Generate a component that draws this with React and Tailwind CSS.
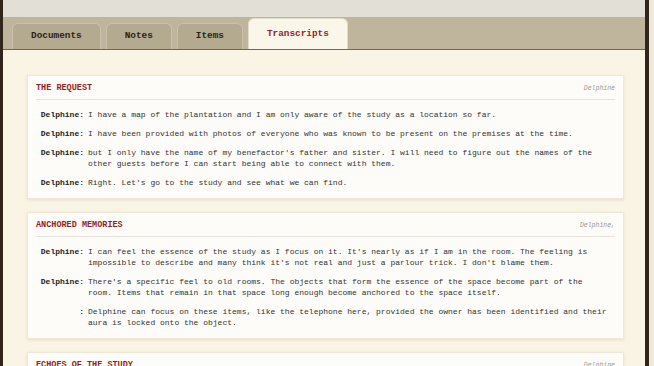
import { useState } from "react";

const tabs = ["Documents", "Notes", "Items", "Transcripts"];

const transcripts = [
  {
    title: "THE REQUEST",
    speakers: "Delphine",
    lines: [
      { who: "Delphine", text: "I have a map of the plantation and I am only aware of the study as a location so far." },
      { who: "Delphine", text: "I have been provided with photos of everyone who was known to be present on the premises at the time." },
      {
        who: "Delphine",
        text: "but I only have the name of my benefactor's father and sister. I will need to figure out the names of the other guests before I can start being able to connect with them.",
      },
      { who: "Delphine", text: "Right. Let's go to the study and see what we can find." },
    ],
  },
  {
    title: "ANCHORED MEMORIES",
    speakers: "Delphine,",
    lines: [
      {
        who: "Delphine",
        text: "I can feel the essence of the study as I focus on it. It's nearly as if I am in the room. The feeling is impossible to describe and many think it's not real and just a parlour trick. I don't blame them.",
      },
      {
        who: "Delphine",
        text: "There's a specific feel to old rooms. The objects that form the essence of the space become part of the room. Items that remain in that space long enough become anchored to the space itself.",
      },
      {
        who: "",
        text: "Delphine can focus on these items, like the telephone here, provided the owner has been identified and their aura is locked onto the object.",
      },
    ],
  },
  {
    title: "ECHOES OF THE STUDY",
    speakers: "Delphine",
    lines: [{ who: "Delphine", text: "The telephone is the first thing I notice." }],
  },
];

const TranscriptCard = ({ item }) => {
  return (
    <div className="bg-[#fdfcf9] border border-[#efe8d8] shadow-[0_1px_3px_rgba(90,70,40,0.12)] px-[8px] shrink-0">
      <div className="flex items-center justify-between pt-[7px] pb-[5px] border-b border-[#e8e3d8] leading-[11px]">
        <span className="text-[8.5px] font-bold text-[#9a1b22]">{item.title}</span>
        <span className="text-[6.5px] italic text-[#9a9690]">{item.speakers}</span>
      </div>
      <div className="flex flex-col gap-[8px] pt-[9px] pb-[10px] pr-[7px]">
        {item.lines.map((line, i) => (
          <div key={i} className="flex text-[8px] leading-[11px]">
            <span className="w-[48px] shrink-0 text-right font-bold text-[#222]">{line.who}:</span>
            <span className="flex-1 pl-[4px] text-[#333]">{line.text}</span>
          </div>
        ))}
      </div>
    </div>
  );
};

export default function App() {
  const [active, setActive] = useState("Transcripts");

  return (
    <div className="flex w-[654px] h-[366px] overflow-hidden bg-[#efe9d9] font-['Liberation_Mono','Courier_New',monospace]">
      <div className="w-[649px] h-full flex flex-col border-l-[3px] border-r-[4px] border-[#30261c] bg-[#faf4e4]">
        <div className="h-[17px] shrink-0 bg-[#e2dfd7]" />
        <div className="h-[33px] shrink-0 flex items-end gap-[5px] pl-[9px] bg-[#bfb59c] border-b border-[#6f6656]">
          {tabs.map((tab) =>
            tab === active ? (
              <button
                key={tab}
                onClick={() => setActive(tab)}
                className="h-[31px] px-[18px] rounded-t-[6px] bg-[#fbf6ea] border border-b-0 border-[#e4dccb] text-[9.4px] font-bold text-[#9b1b2b] flex items-center"
              >
                {tab}
              </button>
            ) : (
              <button
                key={tab}
                onClick={() => setActive(tab)}
                className="h-[26px] px-[18px] rounded-t-[6px] bg-[#b4aa8f] border border-b-0 border-[#cbc1a8] text-[9.4px] font-bold text-[#2a2418] flex items-center"
              >
                {tab}
              </button>
            )
          )}
        </div>
        <div className="flex-1 flex flex-col gap-[13px] pt-[25px] pl-[24px] pr-[21px] overflow-hidden">
          {transcripts.map((item) => (
            <TranscriptCard key={item.title} item={item} />
          ))}
        </div>
      </div>
    </div>
  );
}
